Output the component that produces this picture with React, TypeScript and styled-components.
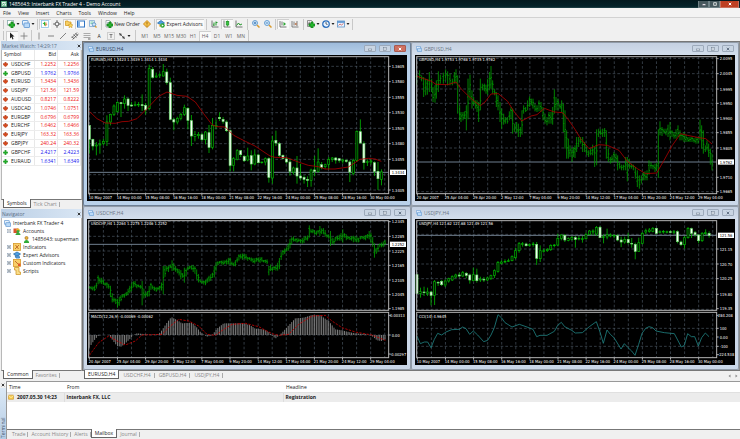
import React from "react";
import styled, { createGlobalStyle, css } from "styled-components";

const UI = `"Open Sans", "Noto Sans", sans-serif`;
const CHART = `"DejaVu Sans Condensed", "DejaVu Sans", sans-serif`;

const Global = createGlobalStyle`
  * { box-sizing: border-box; }
  body { margin: 0; background: #f0f0f0; font-family: ${UI}; font-size: 5px; line-height: 8px; color: #222; }
  button { margin: 0; padding: 0; border: 0; background: none; font: inherit; color: inherit; cursor: pointer; }
  svg { display: block; flex: none; }
  ul { margin: 0; padding: 0; list-style: none; }
`;

/* ---------- frame ---------- */

const Page = styled.div`
  display: flex;
  flex-direction: column;
  min-height: 100vh;
`;

const TitleBar = styled.header`
  display: flex;
  align-items: center;
  height: 8px;
  padding-left: 1px;
  gap: 2px;
  background: linear-gradient(#03191f, #042229 80%, #24464c);
  color: #fff;
`;

const Caption = styled.div`
  flex: 1;
  white-space: nowrap;
`;

const SysButton = styled.button<{ $close?: boolean }>`
  display: grid;
  place-items: center;
  width: ${(p) => (p.$close ? 19 : 11)}px;
  height: 7px;
  align-self: flex-start;
  border: 1px solid ${(p) => (p.$close ? "#c9705c" : "#6f8186")};
  border-top: 0;
  background: ${(p) => (p.$close ? "#bd3f22" : "#46585d")};
`;

const SysGroup = styled.div`
  display: flex;
  margin-right: 1px;
`;

const MenuBar = styled.nav`
  display: flex;
  align-items: center;
  height: 10px;
  padding-left: 3px;
  gap: 7px;
  border-bottom: 1px solid #d2d2d2;
  background: #f3f3f3;
`;

const ToolRow = styled.div<{ $h: number }>`
  display: flex;
  align-items: center;
  height: ${(p) => p.$h}px;
  padding-left: 3px;
`;

const Grip = styled.span`
  width: 2px;
  height: 9px;
  margin-right: 1px;
  border-left: 1px solid #c4c4c4;
`;

const Divider = styled.span<{ $m?: number }>`
  width: 1px;
  height: 11px;
  margin: 0 ${(p) => p.$m ?? 1}px;
  background: #c8c8c8;
`;

const Tool = styled.button<{ $w?: number; $on?: boolean }>`
  display: flex;
  align-items: center;
  justify-content: center;
  gap: 1px;
  width: ${(p) => p.$w ?? 12}px;
  height: 10px;
  white-space: nowrap;
  ${(p) =>
    p.$on &&
    css`
      background: #fafafa;
      box-shadow: inset 1px 1px 0 #cfcfcf;
    `}
`;

const Period = styled(Tool)`
  color: #666;
`;

const Workspace = styled.div`
  display: grid;
  grid-template-columns: 82px minmax(0, 1fr);
`;

/* ---------- side panels ---------- */

const Side = styled.aside`
  display: grid;
  grid-template-rows: 168fr 171fr;
`;

const Panel = styled.section`
  display: flex;
  flex-direction: column;
  min-height: 0;
  padding-left: 1px;
`;

const PanelHead = styled.div`
  display: flex;
  align-items: center;
  justify-content: space-between;
  height: 9px;
  padding: 0 1px;
  background: linear-gradient(90deg, #bcd0e6, #d9e6f4);
  color: #5c6f86;
`;

const PanelClose = styled.button`
  display: grid;
  place-items: center;
  width: 5px;
  height: 7px;
`;

const PanelBody = styled.div`
  flex: 1;
  min-height: 0;
  background: #fff;
  border: 1px solid #b8b8b8;
  border-bottom-color: #777;
  border-top: 0;
`;

const Tabs = styled.div<{ $pad: number }>`
  display: flex;
  align-items: flex-start;
  height: 9px;
  padding-left: ${(p) => p.$pad}px;
`;

const Tab = styled.button<{ $on?: boolean; $compact?: boolean }>`
  height: 8px;
  padding: 0 ${(p) => (p.$compact ? 3 : 4)}px;
  color: ${(p) => (p.$on ? "#222" : "#888")};
  line-height: 8px;
  white-space: nowrap;
  ${(p) =>
    p.$on
      ? css`
          margin-top: -1px;
          height: 9px;
          background: #fff;
          border: 1px solid #666;
          border-top: 0;
          padding: 0 3px;
        `
      : css`
          background: linear-gradient(#aaa, #aaa) right 2px / 1px 5px no-repeat;
        `}
`;

const Quotes = styled.table`
  width: 100%;
  height: 116px;
  border-collapse: collapse;
  font-size: 5px;
  line-height: 7px;
  th, td { padding: 0 1px; text-align: right; font-weight: 400; border-right: 1px solid #e8e8e8; border-bottom: 1px solid #ececec; }
  th { height: 10px; border-bottom-color: #d5d5d5; }
  th:first-child, td:first-child { text-align: left; }
  th:first-child { padding-left: 2px; }
`;

const Sym = styled.span`
  display: flex;
  align-items: center;
  gap: 3px;
`;

const Price = styled.td<{ $up: boolean }>`
  width: 23px;
  color: ${(p) => (p.$up ? "#1212ee" : "#ee1212")};
`;

const Tree = styled.ul`
  padding: 1px 0 0 2px;
`;

const Node = styled.li<{ $depth: number }>`
  display: flex;
  align-items: center;
  gap: 2px;
  height: 8px;
  padding-left: ${(p) => [0, 3, 19][p.$depth]}px;
  white-space: nowrap;
`;

/* ---------- chart windows ---------- */

const Desk = styled.main`
  display: flex;
  flex-direction: column;
  min-width: 0;
`;

const WindowGrid = styled.div`
  display: grid;
  grid-template-columns: repeat(2, minmax(0, 1fr));
  padding-right: 1px;
  background: #8c8c8c;
  border: 1px solid #777;
  border-right: 0;
`;

const Win = styled.section<{ $active?: boolean }>`
  padding: 0 4px 5px;
  border-radius: 2px;
  background: ${(p) =>
    p.$active ? "linear-gradient(#9cb9d9, #b9d1ea 13px, #b9d1ea)" : "linear-gradient(#c3cfe0, #d3deec 13px, #cad7e8)"};
  box-shadow: inset 0 0 0 1px ${(p) => (p.$active ? "#6d7f96" : "#909ba8")};
`;

const WinHead = styled.div<{ $active?: boolean }>`
  display: flex;
  align-items: center;
  gap: 2px;
  height: 13px;
  padding-left: 1px;
  color: ${(p) => (p.$active ? "#30435c" : "#6c7886")};
`;

const WinName = styled.h2`
  flex: 1;
  margin: 0;
  font-size: 5px;
  font-weight: 400;
`;

const WinButton = styled.button<{ $red?: boolean }>`
  display: grid;
  place-items: center;
  width: 12px;
  height: 7px;
  margin-right: 1px;
  border: 1px solid ${(p) => (p.$red ? "#a85a50" : "#9daabb")};
  border-radius: 1px;
  background: ${(p) => (p.$red ? "#cf7060" : "#c9d5e3")};
`;

const Plot = styled.svg`
  width: 100%;
  height: auto;
  background: #000;
  font-family: ${CHART};
  font-size: 12px;
`;

/* ---------- terminal ---------- */

const Terminal = styled.section`
  display: grid;
  grid-template-columns: 6px minmax(0, 1fr);
  flex: 1;
  margin-top: 1px;
`;

const TermRail = styled.div`
  display: flex;
  flex-direction: column;
  align-items: center;
  justify-content: space-between;
`;

const RailName = styled.div`
  flex: 1;
  width: 6px;
  padding-top: 1px;
  background: linear-gradient(#b3cbe4, #dce9f6);
  color: #44566c;
  line-height: 6px;
  writing-mode: vertical-rl;
  transform: rotate(180deg);
`;

const TermMain = styled.div`
  display: flex;
  flex-direction: column;
  border-top: 1px solid #999;
  border-left: 1px solid #999;
`;

const TermBody = styled.div`
  flex: 1;
  background: #fff;
  border-bottom: 1px solid #777;
`;

const Mail = styled.table`
  width: 100%;
  border-collapse: collapse;
  table-layout: fixed;
  th, td { height: 10px; padding: 0 2px; text-align: left; line-height: 8px; white-space: nowrap; }
  th { font-weight: 400; border-bottom: 1px solid #e0e0e0; }
  td { font-weight: 700; background: #ececec; border-left: 1px solid #ddd; }
  th:nth-child(1) { width: 57px; }
  th:nth-child(2) { width: 219px; }
  th:nth-child(n + 2) { padding-left: 3px; }
  td:first-child { padding-left: 1px; border-left: 0; }
`;

const MailTime = styled.span`
  display: flex;
  align-items: center;
  gap: 3px;
`;

const Spacer = styled.span`
  flex: 1;
`;

const Nudge = styled.button`
  display: grid;
  place-items: center;
  width: 7px;
  height: 9px;
`;

/* ---------- icons ---------- */

const Ico = ({ s = 8, children }: { s?: number; children: React.ReactNode }) => (
  <svg width={s} height={s} viewBox="0 0 16 16" fill="none" strokeWidth="1.6" aria-hidden="true">
    {children}
  </svg>
);
const Caret = () => (
  <svg width="4" height="4" viewBox="0 0 8 8" aria-hidden="true">
    <path d="M1 2h6L4 6z" fill="#222" />
  </svg>
);
const plus = "M8 4h4v4h4v4h-4v4H8v-4H4V8h4z";

const icons: Record<string, React.ReactNode> = {
  newChart: (<><rect x="1" y="1" width="12" height="9" fill="#fff" stroke="#8aa" /><path d={plus} fill="#27b52e" stroke="#12801a" /></>),
  windows: (<><rect x="1" y="1" width="11" height="9" rx="1" fill="#e8f3ff" stroke="#5b93cf" /><rect x="4" y="6" width="11" height="9" rx="1" fill="#b9d9f8" stroke="#5b93cf" /></>),
  watch: (<><rect x="1" y="1" width="14" height="14" fill="#fff" stroke="#8fc2e8" /><path d="M8 3l-5 5h3v3h3V8z" fill="#27b52e" /><path d="M8 13l5-4h-2V5H9v4z" fill="#e0762a" /></>),
  cross: (<><circle cx="8" cy="8" r="4" stroke="#555" /><path d="M8 0v6M8 10v6M0 8h6M10 8h6" stroke="#555" /></>),
  folder: (<><path d="M1 2h5l1 2h5v7H1z" fill="#f7cf63" stroke="#d39a25" /><path d="M11 6l1.500 3.300 3.500.4-2.600 2.300.7 3.500-3.100-1.800-3.100 1.800.7-3.500L6 9.700l3.500-.4z" fill="#fbd95a" stroke="#c78f22" strokeWidth="1" /></>),
  terminal: (<><rect x="1" y="2" width="14" height="12" fill="#fff" stroke="#2f74c4" strokeWidth="2" /><path d="M2 3h4v10H2z" fill="#7eb0e6" /></>),
  tester: (<><path d="M1 1h10v12H1z" fill="#e8f1fb" stroke="#7fa8d0" /><path d="M3 4h6M3 7h4" stroke="#6c9" /><circle cx="10" cy="9" r="3.500" fill="#d5ebff" stroke="#4d86bd" /><path d="M12 12l3 3" stroke="#d89a2c" strokeWidth="2.500" /></>),
  order: (<><path d="M2 1h7l3 3v10H2z" fill="#fff" stroke="#899" /><path d="M4 5h5M4 8h3" stroke="#9ab" /><path d={plus} fill="#27b52e" stroke="#12801a" /></>),
  coin: (<><path d="M8 1l7 7-7 7-7-7z" fill="#f5c34b" stroke="#cf8b1c" strokeLinejoin="round" strokeWidth="2" /><path d="M8 4v5M8 11v2" stroke="#8d5b0c" /></>),
  expert: (<><path d="M1 6l7-5 7 5-7 4z" fill="#4f9fe0" stroke="#2b6fae" /><path d="M3 9h10l-1 5H5z" fill="#f0c268" /><circle cx="11" cy="11" r="4.500" fill="#22a32b" /><path d="M9.500 8.500v5l4-2.500z" fill="#fff" /></>),
  bars: (<><path d="M2 1v13h13" stroke="#555" /><path d="M6 5v7M6 10H4M10 3v8M10 5h3" stroke="#23992a" strokeWidth="2" /></>),
  candle: (<><path d="M2 1v13h13" stroke="#555" /><path d="M9 1v12" stroke="#23992a" /><rect x="6.500" y="3" width="5" height="7" fill="#37c43f" stroke="#23992a" /></>),
  line: (<><path d="M2 1v13h13" stroke="#555" /><path d="M3 11l4-5 3 4 4-2" stroke="#23992a" strokeWidth="2" /></>),
  zoomIn: (<><circle cx="6" cy="6" r="5" fill="#d8edff" stroke="#4a8ac8" /><path d="M3.500 6h5M6 3.500v5" stroke="#2364a8" /><path d="M10 10l5 5" stroke="#d99b2e" strokeWidth="3" /></>),
  zoomOut: (<><circle cx="6" cy="6" r="5" fill="#d8edff" stroke="#4a8ac8" /><path d="M3.500 6h5" stroke="#2364a8" /><path d="M10 10l5 5" stroke="#d99b2e" strokeWidth="3" /></>),
  scroll: (<><path d="M2 2v12h13M6 3v8" stroke="#555" /><path d="M9 4l5 4-5 4z" fill="#29a432" /></>),
  shift: (<><path d="M2 2v12h13M6 3v8M12 2v10" stroke="#666" /><path d="M11 5v6L7 8z" fill="#b5673a" /></>),
  indicator: (<><path d="M1 1h8l2 2v10H1z" fill="#eee" stroke="#777" /><path d="M6 4c-2 0-2 1-2 6M3 7h4" stroke="#555" /><path d={plus} fill="#22b92b" stroke="#12801a" /></>),
  clock: (<><circle cx="8" cy="8" r="6.500" fill="#eaf4ff" stroke="#2d6fbd" strokeWidth="2.500" /><path d="M8 4v4l3 1" stroke="#345" /></>),
  template: (<><rect x="1" y="2" width="14" height="12" fill="#eaf4ff" stroke="#5f93c8" /><path d="M1 4h14" stroke="#4b8acb" strokeWidth="3" /><path d="M3 11l3-3 3 2 4-3" stroke="#c55" /></>),
  cursor: (<path d="M4 1v12l3-3 2 5 2-1-2-5h4z" fill="#222" />),
  plusThin: (<path d="M8 1v14M1 8h14" stroke="#777" />),
  vline: (<path d="M8 1v14" stroke="#777" />),
  hline: (<path d="M2 8h12" stroke="#666" />),
  trend: (<path d="M2 14L14 2" stroke="#666" />),
  channel: (<path d="M1 12L12 1M3 15L15 4M5 5l6 6M2 9l4 5M9 3l5 4" stroke="#555" />),
  fibo: (<><path d="M1 3h14M1 7h14M1 11h14" stroke="#999" /><path d="M10 14h5" stroke="#666" strokeWidth="2" /></>),
  arrows: (<><path d="M2 2l6 2-4 4z" fill="#444" /><path d="M14 14l-6-2 4-4z" fill="#444" /><path d="M4 4l8 8" stroke="#444" /></>),
  label: (<><rect x="1" y="1" width="14" height="14" stroke="#999" strokeDasharray="2 2" /><path d="M5 5h6M8 5v7" stroke="#666" /></>),
  down: (<path d="M6 1h4v4h5v4l-7 6-7-6V5h5z" fill="#d84a1c" stroke="#a83010" />),
  up: (<path d="M6 1h4v5h5v4h-5v5H6v-5H1V6h5z" fill="#22b52a" stroke="#168a1c" />),
  accounts: (<><rect x="1" y="3" width="9" height="9" fill="#d9532c" /><path d="M5 6l5-4 5 5-4 2z" fill="#e8b22f" /><circle cx="10" cy="9" r="3" fill="#37a83c" /><path d="M5 16c0-6 10-6 10 0z" fill="#37a83c" /></>),
  user: (<><circle cx="8" cy="4.500" r="3.500" fill="#e9b23a" stroke="#a87414" /><path d="M2 16c0-9 12-9 12 0z" fill="#2eaa36" /></>),
  func: (<><rect x="1" y="1" width="14" height="14" fill="#f8cf6a" stroke="#d79a2a" /><path d="M4 12L12 4M5 4l6 8" stroke="#b55a1c" /></>),
  hat: (<><path d="M1 6l7-4 7 4-7 4z" fill="#4f9fe0" stroke="#2b6fae" /><path d="M4 9c2 2 6 2 8 0l1 5H6z" fill="#6ab0e6" stroke="#2b6fae" /></>),
  custom: (<><rect x="1" y="1" width="14" height="14" fill="#f8cf6a" stroke="#d79a2a" /><path d="M4 4l8 8" stroke="#b55a1c" /><path d="M10 9h5v5h-5z" fill="#e2572b" /></>),
  script: (<path d="M3 1h9v9h3v5H6V6H3z" fill="#f9dd8a" stroke="#d1992b" />),
  mail: (<><rect x="1" y="3" width="14" height="11" rx="1" fill="#f8cf52" stroke="#c48a1b" /><path d="M1 4l7 6 7-6" stroke="#fff3c0" /></>),
  x: (<path d="M3 3l10 10M13 3L3 13" stroke="#222" strokeWidth="3.500" />),
  logo: (<><rect x="1" y="1" width="14" height="14" fill="#e9f5ee" stroke="#3aa76a" /><path d="M3 10l3-4 3 3 4-5M4 13h8" stroke="#1f8f52" strokeWidth="2" /></>),
  min: (<rect x="2" y="8" width="12" height="5" fill="#fff" stroke="#667" />),
  max: (<rect x="3" y="3" width="10" height="10" stroke="#fff" strokeWidth="3" />),
  wx: (<path d="M3 3l10 10M13 3L3 13" stroke="#fff" strokeWidth="4" />),
  wmin: (<rect x="1" y="8" width="14" height="6" fill="#eef3f8" stroke="#667588" strokeWidth="2" />),
  wmax: (<><rect x="2" y="2" width="12" height="12" fill="#eef3f8" stroke="#667588" strokeWidth="2" /><rect x="6" y="6" width="4" height="4" fill="#667588" /></>),
  wclose: (<path d="M3 3l10 10M13 3L3 13" stroke="#667588" strokeWidth="4" />),
};
const I = ({ n, s }: { n: string; s?: number }) => <Ico s={s}>{icons[n]}</Ico>;

const Expander = ({ open }: { open?: boolean }) => (
  <svg width="4" height="4" viewBox="0 0 8 8" aria-hidden="true">
    <rect x="0.500" y="0.500" width="7" height="7" fill="#fff" stroke="#8a9bb0" />
    <path d={open ? "M2 4h4" : "M2 4h4M4 2v4"} stroke="#345" />
  </svg>
);

/* ---------- chart data (drawing units of the 960 x 438 plot) ---------- */

type Candle = [number, number, number, number]; // open, close, high, low
type Bar = [number, number, number]; // x, high, low
type Pt = [number, number];

const pairs = (s: string): Pt[] => s.trim().split(/\s+/).map((p) => p.split(",").map(Number) as Pt);
const candles = (s: string): Candle[] => s.trim().split(/\s+/).map((p) => p.split(",").map(Number) as Candle);
const bars = (s: string, dx = 0): Bar[] =>
  s.trim().split(/\s+/).map((p) => {
    const [x, h, l] = p.split(",").map(Number);
    return [x + dx, h, l] as Bar;
  });

const eur = candles(`
250,292,250,335 292,312,290,325 312,309,300,340 309,306,293,335 304,298,290,310 298,240,220,312 240,217,215,250
217,192,187,222 208,181,178,212 182,185,180,225 185,171,160,200 171,190,167,207 189,192,180,195 190,188,178,193
189,187,180,195 188,191,157,207 190,204,183,218 200,80,68,205 82,106,75,110 105,102,92,108 100,98,92,107
102,89,66,104 90,122,80,128 122,232,107,235 233,240,228,265 240,229,224,247 229,217,212,235 217,197,188,222
199,235,195,262 236,282,219,312 283,278,267,298 281,277,270,290 278,293,273,298 293,270,267,307 272,316,249,333
316,250,228,322 253,250,234,262 226,230,211,237 232,238,225,245 240,266,235,270 266,370,263,388 370,350,345,388
352,326,321,355 326,338,324,345 343,356,340,360 354,342,317,358 341,366,325,385 366,339,322,370 339,362,335,365
362,360,359,365 360,350,346,370 350,406,346,422 408,297,281,425 295,303,266,312 305,340,300,345 340,349,337,352
351,360,345,365 360,388,350,401 390,378,374,398 378,402,342,425 402,408,365,415 406,412,400,425 412,415,403,435
415,384,380,434 384,388,342,403 388,360,319,392 368,376,360,382 374,368,365,380 367,352,345,382 352,348,345,360
348,354,345,365 350,355,348,362 357,354,350,365 355,358,352,362 360,390,355,420 394,355,350,400 355,268,265,360
269,303,232,305 305,362,298,383 361,359,352,372 360,357,352,368 362,388,358,402 388,410,360,444 412,390,382,430`);

const eurMa = pairs(`22,208 45,230 70,243 100,244 120,239 140,238 165,230 195,200 230,163 255,150 285,160 315,163 340,180
365,215 390,248 405,254 430,255 455,280 490,298 519,312 564,342 579,346 614,347 649,360 679,370 709,374 729,381 759,381
799,375 834,352 859,349 879,351 898,358`);

const gbp: Bar[] = [
  ...bars(`17,95,128 26,85,110 32,100,118 38,105,165 44,110,160 49,112,158 55,90,150 62,110,150 66,135,180 72,130,182
76,115,170 82,88,150 88,98,125 97,92,125 104,82,115 110,88,130 117,95,130 124,110,130 130,90,125 135,82,125 140,100,215
146,190,235 150,210,240 156,210,235 161,208,230 166,190,265 171,110,232 177,98,175 183,145,200 188,165,188 193,175,200
198,175,210 203,180,240 208,110,205 214,125,145 220,125,148 225,128,155 230,110,158 236,90,145 240,72,140 245,115,155
251,140,160 256,150,195 261,160,205 267,180,240 272,200,260 278,215,248 283,225,245 289,225,245 295,208,235 300,195,230
305,200,275 311,245,270 317,240,272 322,245,285 328,255,285 333,205,278 338,190,215 344,195,210 350,175,205 356,163,195
361,170,190 366,170,200 372,185,208 378,190,210 384,175,208 390,180,210 396,195,235 402,215,245 408,225,250 414,210,245
420,210,245 425,195,248 430,142,215 435,165,205 441,170,205 447,185,200 452,175,210 457,185,270 462,205,320 467,265,350
472,290,350 477,310,345 483,318,360 488,315,345`),
  ...bars(`3,310,348 8,285,330 14,285,315 20,285,305 26,285,330 32,300,330 38,315,340 44,325,345 50,320,340 56,308,340
62,315,375 68,262,370 74,260,285 80,262,280 86,260,285 92,258,285 97,265,350 103,320,360 109,345,365 114,340,362
120,330,360 126,335,360 131,340,385 137,360,380 143,368,385 149,368,385 155,345,385 160,345,418 166,350,380 172,365,380
178,368,385 184,375,410 190,385,435 196,400,440 202,400,425 208,390,415 213,388,415 219,385,415 225,355,398 231,360,380
237,368,382 243,365,390 248,362,385 253,262,408 258,238,280 264,255,282 270,260,275 276,260,280 282,248,285 288,240,295
294,265,285 300,270,290 306,262,290 312,250,285 318,265,295 324,275,295 330,270,300 336,278,300 342,285,300 348,285,300
354,285,300 360,288,302 366,285,305 372,285,305 378,233,295 383,250,320 388,265,335 394,310,330 399,295,325 404,305,345
409,320,368 414,335,385`, 489),
];

const gbpMa = pairs(`17,102 32,108 60,117 75,127 110,128 135,120 150,140 170,160 190,178 208,191 222,180 240,156 262,155
290,178 310,210 332,237 360,222 378,218 400,199 430,210 455,212 470,230 492,262 509,290 534,320 564,308 589,310 624,325
649,358 679,380 704,395 737,393 759,355 784,310 809,275 829,280 864,287 884,290 903,306`);

const lerp = (pts: Pt[], x: number) => {
  let i = 1;
  while (i < pts.length - 1 && pts[i][0] < x) i++;
  const [x0, y0] = pts[i - 1];
  const [x1, y1] = pts[i];
  return y0 + ((y1 - y0) * (x - x0)) / (x1 - x0);
};

const chfMid = pairs(`22,245 35,248 42,240 50,220 58,232 70,233 80,245 88,280 100,290 108,292 118,268 130,268 145,245
155,235 165,240 178,245 184,270 196,265 205,240 215,248 225,250 237,245 243,215 246,190 255,190 262,180 270,178 280,195
290,200 298,215 305,210 315,185 330,185 337,195 345,218 355,228 368,230 380,218 392,210 402,170 415,170 430,172 440,165
452,178 462,165 472,150 485,155 500,158 512,165 525,163 540,165 555,165 563,190 580,190 588,180 595,145 605,135 615,130
625,105 640,100 655,108 665,100 678,98 684,70 695,80 708,80 718,75 728,88 740,90 750,110 760,100 775,95 783,85 795,98
810,98 820,105 835,95 848,95 862,90 872,120 878,140 886,122 895,118 903,115 910,110`);

const chfSpikes: Record<number, Pt> = {
  5: [208, 235], 16: [278, 305], 30: [225, 298], 42: [180, 265], 47: [163, 195], 54: [185, 230], 102: [180, 208],
  125: [58, 95], 131: [60, 90], 137: [75, 120], 144: [70, 110], 159: [75, 100], 162: [112, 155],
};

const chf: Bar[] = Array.from({ length: 169 }, (_, i) => {
  const x = 22 + i * 5.28;
  const prev = lerp(chfMid, Math.max(22, x - 5.28));
  const mid = lerp(chfMid, x);
  const spread = 3 + ((i * 37) % 9);
  const s = chfSpikes[i];
  return s ? [x, s[0], s[1]] : [x, Math.min(prev, mid) - spread, Math.max(prev, mid) + 2 + ((i * 23) % 7)];
});

const macd = pairs(`22,425 35,405 48,390 60,387 80,387 90,400 105,420 118,422 130,412 145,398 155,386 165,382 185,384
200,386 230,385 240,372 255,350 268,333 285,342 300,352 330,350 345,365 357,380 375,392 390,388 405,368 425,352 450,352
485,352 505,358 520,368 545,370 560,378 580,398 592,388 605,375 620,358 640,337 665,335 690,327 715,328 740,345 760,370
780,373 800,378 820,382 850,384 870,390 885,403 898,405 910,400`);

const macdSignal = pairs(`22,448 50,410 80,390 105,405 130,417 160,405 180,387 240,385 265,360 290,340 320,345 350,360
375,385 400,388 425,370 450,355 490,352 530,362 570,383 590,388 620,385 650,355 690,330 730,328 750,345 780,365 820,378
870,387 910,403`);

const jpy = candles(`
206,262,206,262 262,257,245,275 258,260,242,270 262,258,245,270 258,268,255,298 268,227,222,297 229,231,225,240
226,236,222,240 237,225,220,243 225,218,215,230 222,212,208,225 213,207,203,217 207,210,200,214 210,200,195,213
202,208,198,217 207,222,203,233 224,206,185,226 207,224,188,230 222,219,212,228 220,222,213,228 222,216,212,225
217,209,206,222 208,194,190,216 196,169,165,200 172,168,163,175 167,166,160,172 166,164,158,168 164,152,148,166
155,134,125,160 134,113,108,140 115,113,108,122 114,119,110,122 117,116,112,122 116,114,108,122 115,157,108,177
158,134,118,168 136,134,128,140 134,130,126,138 131,118,115,135 118,117,114,124 117,97,83,120 97,87,85,103
88,102,84,108 103,98,94,106 100,94,90,104 95,100,90,125 99,97,90,103 100,98,90,110 98,86,80,100 86,75,72,88
78,75,70,88 84,64,60,90 64,95,60,97 93,92,85,112 93,86,68,100 90,87,82,94 90,88,85,97 89,102,85,106
102,108,92,123 108,100,92,113 100,110,80,115 112,114,96,125 115,136,110,160 136,110,95,138 112,82,78,115 78,74,68,84
76,72,66,80 76,67,63,79 67,82,66,85 78,77,73,82 78,76,72,83 78,77,74,82 77,79,73,82 79,77,72,84
77,107,73,112 108,116,104,120 116,95,90,128 95,67,63,98 68,82,65,96 80,86,75,92 87,104,84,112 104,82,78,108
83,80,70,88 82,88,76,95`);

const cci = pairs(`18,390 28,413 40,408 50,408 60,425 70,400 80,382 92,387 105,378 122,371 145,370 155,363 165,368 176,385
187,375 200,387 218,407 230,403 240,387 250,365 261,326 272,336 282,350 303,363 325,355 345,362 366,370 377,392 387,388
408,388 430,376 440,358 451,349 461,362 482,373 493,381 514,380 535,362 556,347 567,378 577,412 588,372 598,385 609,395
630,429 640,413 651,425 662,435 672,448 683,415 693,382 704,367 714,362 725,365 735,375 760,380 790,383 811,423 820,418
830,383 841,392 851,392 862,420 872,395 883,381 894,392`);

const mayDates = ["10 May 2007", "14 May 00:00", "15 May 08:00", "16 May 16:00", "18 May 00:00", "21 May 08:00", "22 May 16:00", "24 May 00:00", "25 May 08:00", "28 May 16:00", "30 May 00:00"];
const aprilDates = ["20 Apr 2007", "25 Apr 04:00", "29 Apr 20:00", "2 May 12:00", "7 May 04:00", "9 May 20:00", "14 May 12:00", "17 May 04:00", "21 May 20:00", "24 May 12:00", "29 May 04:00"];

/* ---------- chart drawing ---------- */

const GREEN = "#00b400";

const Candles = ({ data, x0 }: { data: Candle[]; x0: number }) => (
  <g stroke={GREEN} strokeWidth="2.500">
    {data.map(([o, c, h, l], i) => {
      const x = x0 + i * 10.56;
      const down = c > o;
      return (
        <g key={i}>
          <path d={`M${x} ${h}V${l}`} />
          <rect x={x - 3} y={Math.min(o, c)} width="6" height={Math.max(2, Math.abs(c - o))} fill={down ? "#f4fff4" : "#001800"} stroke={down ? "#6fdc6f" : GREEN} strokeWidth="2" />
        </g>
      );
    })}
  </g>
);

const Bars = ({ data }: { data: Bar[] }) => (
  <path
    stroke="#009c00"
    strokeWidth="2.500"
    d={data
      .map(([x, h, l], i) => {
        const a = h + (l - h) * (0.25 + ((i * 7) % 5) / 10);
        const b = h + (l - h) * (0.3 + ((i * 3) % 5) / 10);
        return `M${x} ${h}V${l}M${x - 3} ${a}H${x}M${x} ${b}h3`;
      })
      .join("")}
  />
);

const Curve = ({ pts, color, dash }: { pts: Pt[]; color: string; dash?: string }) => (
  <polyline points={pts.map((p) => p.join(",")).join(" ")} fill="none" stroke={color} strokeWidth="2.500" strokeDasharray={dash} />
);

type Label = [string, number];

interface ChartProps {
  left: number;
  right: number;
  caption: string;
  rows: number[];
  labels: Label[];
  price: Label;
  dates: string[];
  sub?: { caption: string; rows: number[]; body: React.ReactNode };
  children: React.ReactNode;
}

const Chart = ({ left, right, caption, rows, labels, price, dates, sub, children }: ChartProps) => {
  const origin = left - 5;
  const bottom = sub ? 313 : 455;
  const cols = Array.from({ length: 22 }, (_, i) => left + 2 + i * 42.2).filter((x) => x < right);
  return (
    <Plot viewBox={`${origin} 39 960 438`} role="img" aria-label={caption}>
      <g stroke="#4c5864" strokeWidth="2" strokeDasharray="8 6" fill="none">
        {cols.map((x) => (
          <path key={x} d={`M${x} 44V455`} />
        ))}
        {rows.concat(sub ? sub.rows : []).map((y) => (
          <path key={y} d={`M${left} ${y}H${right}`} />
        ))}
      </g>
      <path d={`M${left} ${price[1]}H${right}`} stroke="#6f7f8f" strokeWidth="3" />
      <g fill="none">{children}</g>
      {sub && (
        <>
          <rect x={left} y="314" width={right - left} height="5" fill="#000" />
          <g fill="none">{sub.body}</g>
          <rect x={left} y="319" width={right - left} height="136" fill="none" stroke="#b4b4b4" strokeWidth="3" />
        </>
      )}
      <rect x={left} y="44" width={right - left} height={bottom - 44} fill="none" stroke="#b4b4b4" strokeWidth="3" />
      <path d={cols.filter((_, i) => i % 2 === 0).map((x) => `M${x} 455v6`).join("")} stroke="#b4b4b4" strokeWidth="3" />
      <path d={labels.map(([, y]) => `M${right} ${y}h6`).join("")} stroke="#b4b4b4" strokeWidth="3" />
      <g fill="#fff">
        <text x={left + 7} y="58">{caption}</text>
        {sub && <text x={left + 7} y="336">{sub.caption}</text>}
        {labels.map(([t, y]) => (
          <text key={t} x={right + (t.length > 6 ? 4 : 9)} y={y + 5}>{t}</text>
        ))}
        {dates.map((t, i) => (
          <text key={t} x={left + i * 84.4} y="472">{t}</text>
        ))}
      </g>
      <rect x={right + 4} y={price[1] - 8} width="48" height="16" fill="#fff" />
      <text x={right + 9} y={price[1] + 5} fill="#000">{price[0]}</text>
    </Plot>
  );
};

const ChartWindow = ({ name, active, children }: { name: string; active?: boolean; children: React.ReactNode }) => (
  <Win $active={active}>
    <WinHead $active={active}>
      <I n="windows" s={6} />
      <WinName>{name}</WinName>
      <WinButton aria-label="Minimize"><I n="wmin" s={4} /></WinButton>
      <WinButton aria-label="Maximize"><I n="wmax" s={4} /></WinButton>
      <WinButton aria-label="Close" $red={active}><I n={active ? "wx" : "wclose"} s={4} /></WinButton>
    </WinHead>
    {children}
  </Win>
);

/* ---------- page data ---------- */

const quotes: [string, string, string, boolean][] = [
  ["USDCHF", "1.2252", "1.2256", false],
  ["GBPUSD", "1.9762", "1.9766", true],
  ["EURUSD", "1.3434", "1.3436", false],
  ["USDJPY", "121.56", "121.59", false],
  ["AUDUSD", "0.8217", "0.8222", false],
  ["USDCAD", "1.0746", "1.0751", false],
  ["EURGBP", "0.6796", "0.6799", false],
  ["EURCHF", "1.6462", "1.6466", false],
  ["EURJPY", "163.32", "163.36", false],
  ["GBPJPY", "240.24", "240.32", false],
  ["GBPCHF", "2.4217", "2.4223", true],
  ["EURAUD", "1.6341", "1.6349", true],
];

const folders: [string, string][] = [
  ["Indicators", "func"],
  ["Expert Advisors", "hat"],
  ["Custom Indicators", "custom"],
  ["Scripts", "script"],
];

interface TabStripProps {
  items: string[];
  on: string;
  pad: number;
  compact?: boolean;
  children?: React.ReactNode;
}

const TabStrip = ({ items, on, pad, compact, children }: TabStripProps) => (
  <Tabs $pad={pad}>
    {items.map((t) => (
      <Tab key={t} $on={t === on} $compact={compact} aria-current={t === on}>{t}</Tab>
    ))}
    {children}
  </Tabs>
);

const Btn = ({ n, on, menu }: { n: string; on?: boolean; menu?: boolean }) => (
  <Tool $w={menu ? 15 : 12} $on={on} aria-label={n}>
    <I n={n} />
    {menu && <Caret />}
  </Tool>
);

export default function App() {
  return (
    <Page>
      <Global />
      <TitleBar>
        <I n="logo" s={6} />
        <Caption>1485643: Interbank FX Trader 4 - Demo Account</Caption>
        <SysGroup>
          <SysButton aria-label="Minimize"><I n="min" s={4} /></SysButton>
          <SysButton aria-label="Maximize"><I n="max" s={4} /></SysButton>
          <SysButton aria-label="Close" $close><I n="wx" s={4} /></SysButton>
        </SysGroup>
      </TitleBar>
      <MenuBar>
        {["File", "View", "Insert", "Charts", "Tools", "Window", "Help"].map((m) => (
          <button key={m}>{m}</button>
        ))}
      </MenuBar>
      <ToolRow $h={12}>
        <Grip />
        <Btn n="newChart" menu />
        <Btn n="windows" menu />
        <Divider />
        <Btn n="watch" on />
        <Btn n="cross" />
        <Btn n="folder" on />
        <Btn n="terminal" on />
        <Btn n="tester" />
        <Divider $m={2} />
        <Tool $w={37}><I n="order" />New Order</Tool>
        <Btn n="coin" />
        <Divider />
        <Tool $w={48} $on><I n="expert" />Expert Advisors</Tool>
        <Divider $m={2} />
        <Btn n="bars" />
        <Btn n="candle" on />
        <Btn n="line" />
        <Divider $m={2} />
        <Btn n="zoomIn" />
        <Btn n="zoomOut" />
        <Divider />
        <Btn n="scroll" on />
        <Btn n="shift" />
        <Divider $m={2} />
        <Btn n="indicator" menu />
        <Btn n="clock" menu />
        <Btn n="template" menu />
        <Divider />
      </ToolRow>
      <ToolRow $h={11}>
        <Grip />
        <Btn n="cursor" on />
        <Btn n="plusThin" />
        <Divider />
        <Btn n="vline" />
        <Btn n="hline" />
        <Btn n="trend" />
        <Btn n="channel" />
        <Btn n="fibo" />
        <Tool>A</Tool>
        <Btn n="label" />
        <Btn n="arrows" menu />
        <Divider $m={3} />
        {["M1", "M5", "M15", "M30", "H1", "H4", "D1", "W1", "MN"].map((p) => (
          <Period key={p} $on={p === "H4"}>{p}</Period>
        ))}
        <Divider />
      </ToolRow>

      <Workspace>
        <Side>
          <Panel>
            <PanelHead>
              Market Watch: 14:29:17
              <PanelClose aria-label="Close"><I n="x" s={4} /></PanelClose>
            </PanelHead>
            <PanelBody>
              <Quotes>
                <thead>
                  <tr><th>Symbol</th><th>Bid</th><th>Ask</th></tr>
                </thead>
                <tbody>
                  {quotes.map(([s, bid, ask, up]) => (
                    <tr key={s}>
                      <td><Sym><I n={up ? "up" : "down"} s={5} />{s}</Sym></td>
                      <Price $up={up}>{bid}</Price>
                      <Price $up={up}>{ask}</Price>
                    </tr>
                  ))}
                </tbody>
              </Quotes>
            </PanelBody>
            <TabStrip items={["Symbols", "Tick Chart"]} on="Symbols" pad={2} compact />
          </Panel>
          <Panel>
            <PanelHead>
              Navigator
              <PanelClose aria-label="Close"><I n="x" s={4} /></PanelClose>
            </PanelHead>
            <PanelBody>
              <Tree>
                <Node $depth={0}><I n="windows" s={7} />Interbank FX Trader 4</Node>
                <Node $depth={1}><Expander open /><I n="accounts" />Accounts</Node>
                <Node $depth={2}><I n="user" s={7} />1485643: superman</Node>
                {folders.map(([t, n]) => (
                  <Node key={t} $depth={1}><Expander /><I n={n} />{t}</Node>
                ))}
              </Tree>
            </PanelBody>
            <TabStrip items={["Common", "Favorites"]} on="Common" pad={2} compact />
          </Panel>
        </Side>

        <Desk>
          <WindowGrid>
            <ChartWindow name="EURUSD,H4" active>
              <Chart
                left={20} right={920} caption="EURUSD,H4  1.3423 1.3439 1.3414 1.3434"
                rows={[73, 119, 166, 212, 259, 305, 352, 398, 444]}
                labels={[["1.3605", 73], ["1.3580", 119], ["1.3555", 166], ["1.3530", 212], ["1.3505", 259], ["1.3480", 305], ["1.3455", 352], ["1.3405", 444]]}
                price={["1.3434", 391]} dates={mayDates}
              >
                <Candles data={eur} x0={22} />
                <Curve pts={eurMa} color="#a80000" />
              </Chart>
            </ChartWindow>
            <ChartWindow name="GBPUSD,H4">
              <Chart
                left={17} right={917} caption="GBPUSD,H4  1.9753 1.9768 1.9735 1.9762"
                rows={[49, 95, 141, 184, 229, 272, 318, 406, 449]}
                labels={[["2.0095", 50], ["2.0045", 95], ["1.9995", 141], ["1.9950", 184], ["1.9900", 229], ["1.9855", 272], ["1.9805", 318], ["1.9710", 406], ["1.9665", 449]]}
                price={["1.9762", 360]} dates={aprilDates}
              >
                <Bars data={gbp} />
                <Curve pts={gbpMa} color="#a80000" />
              </Chart>
            </ChartWindow>
            <ChartWindow name="USDCHF,H4">
              <Chart
                left={20} right={920} caption="USDCHF,H4  1.2264 1.2275 1.2246 1.2252"
                rows={[46, 91, 135, 178, 222, 266, 310]}
                labels={[["1.2345", 47], ["1.2285", 91], ["1.2225", 135], ["1.2165", 178], ["1.2105", 222], ["1.2045", 266], ["1.1985", 308], ["0.00313", 328], ["0.00", 387], ["-0.00297", 444]]}
                price={["1.2252", 115]} dates={aprilDates}
                sub={{
                  caption: "MACD(12,26,9) -0.00069 -0.00062",
                  rows: [387],
                  body: (
                    <>
                      <path
                        stroke="#7c7c7c" strokeWidth="3"
                        d={Array.from({ length: 169 }, (_, i) => `M${22 + i * 5.28} 387V${lerp(macd, 22 + i * 5.28)}`).join("")}
                      />
                      <Curve pts={macdSignal} color="#c80000" dash="7 4" />
                    </>
                  ),
                }}
              >
                <Bars data={chf} />
              </Chart>
            </ChartWindow>
            <ChartWindow name="USDJPY,H4">
              <Chart
                left={17} right={917} caption="USDJPY,H4  121.62 121.68 121.49 121.56"
                rows={[85, 129, 174, 218, 265, 310]}
                labels={[["121.15", 129], ["120.70", 174], ["120.25", 218], ["119.80", 265], ["119.35", 308], ["284.208", 328], ["100", 367], ["0.00", 393], ["-100", 421], ["-224.538", 446]]}
                price={["121.56", 88]} dates={mayDates}
                sub={{ caption: "CCI(14) 4.9645", rows: [367, 421], body: <Curve pts={cci} color="#1f8080" /> }}
              >
                <Candles data={jpy} x0={18} />
              </Chart>
            </ChartWindow>
          </WindowGrid>
          <TabStrip items={["EURUSD,H4", "USDCHF,H4", "GBPUSD,H4", "USDJPY,H4"]} on="EURUSD,H4" pad={2}>
            <Spacer />
            <Nudge aria-label="Scroll left"><svg width="3" height="4" viewBox="0 0 6 8"><path d="M5 1v6L1 4z" fill="#888" /></svg></Nudge>
            <Nudge aria-label="Scroll right"><svg width="3" height="4" viewBox="0 0 6 8"><path d="M1 1v6l4-3z" fill="#888" /></svg></Nudge>
          </TabStrip>
        </Desk>
      </Workspace>

      <Terminal>
        <TermRail>
          <PanelClose aria-label="Close terminal"><I n="x" s={4} /></PanelClose>
          <RailName>Terminal</RailName>
        </TermRail>
        <TermMain>
          <TermBody>
            <Mail>
              <thead>
                <tr><th>Time</th><th>From</th><th>Headline</th></tr>
              </thead>
              <tbody>
                <tr>
                  <td><MailTime><I n="mail" s={6} />2007.05.30 14:23</MailTime></td>
                  <td>Interbank FX, LLC</td>
                  <td>Registration</td>
                </tr>
              </tbody>
            </Mail>
          </TermBody>
          <TabStrip items={["Trade", "Account History", "Alerts", "Mailbox", "Journal"]} on="Mailbox" pad={2} compact />
        </TermMain>
      </Terminal>
    </Page>
  );
}
